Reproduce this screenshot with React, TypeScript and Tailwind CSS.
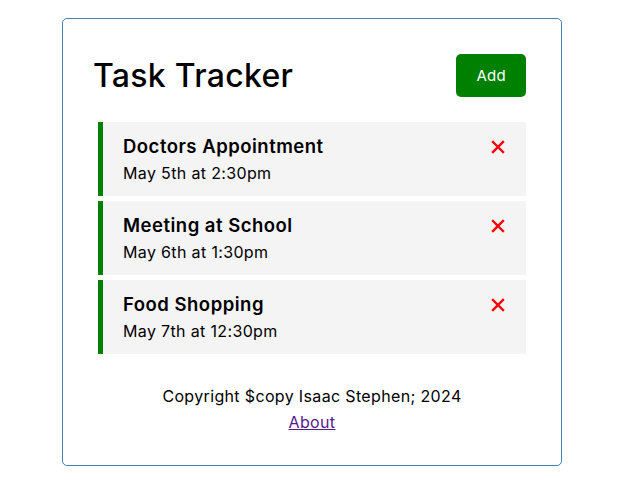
const tasks = [
  { id: 1, text: "Doctors Appointment", day: "May 5th at 2:30pm" },
  { id: 2, text: "Meeting at School", day: "May 6th at 1:30pm" },
  { id: 3, text: "Food Shopping", day: "May 7th at 12:30pm" },
];

const CloseIcon = () => (
  <svg width="14" height="14" viewBox="0 0 14 14" className="mr-[1px]">
    <path d="M2 2 L12 12 M12 2 L2 12" stroke="#ff0000" strokeWidth="2.4" strokeLinecap="square" />
  </svg>
);

export default function App() {
  return (
    <div className="bg-white min-h-screen pt-[18px] pl-[2px] font-['Inter',sans-serif] text-black">
      <div className="mx-auto w-[500px] border border-[#4682b4] rounded-[5px] p-[30px]">
        <header className="flex items-center justify-between mb-5">
          <h1 className="text-[32px] font-medium leading-[1.5] tracking-[0.3px]">Task Tracker</h1>
          <button className="m-[5px] bg-[#008000] text-white text-[15px] leading-[23px] px-5 py-[10px] rounded-[5px] tracking-[0.3px]">
            Add
          </button>
        </header>
        <div className="flex flex-col gap-[5px] mx-[5px]">
          {tasks.map((task) => (
            <div key={task.id} className="bg-[#f4f4f4] border-l-[5px] border-[#008000] px-5 py-[10px]">
              <h3 className="flex items-center justify-between text-[18.5px] font-semibold leading-[29px] tracking-[0.5px]">
                {task.text}
                <CloseIcon />
              </h3>
              <p className="text-base leading-[25px] tracking-[0.35px]">{task.day}</p>
            </div>
          ))}
        </div>
        <footer className="mt-[30px] text-center text-base leading-[25.5px] tracking-[0.35px]">
          <p>Copyright $copy Isaac Stephen; 2024</p>
          <a href="#" className="text-[#551a8b] underline">About</a>
        </footer>
      </div>
    </div>
  );
}
